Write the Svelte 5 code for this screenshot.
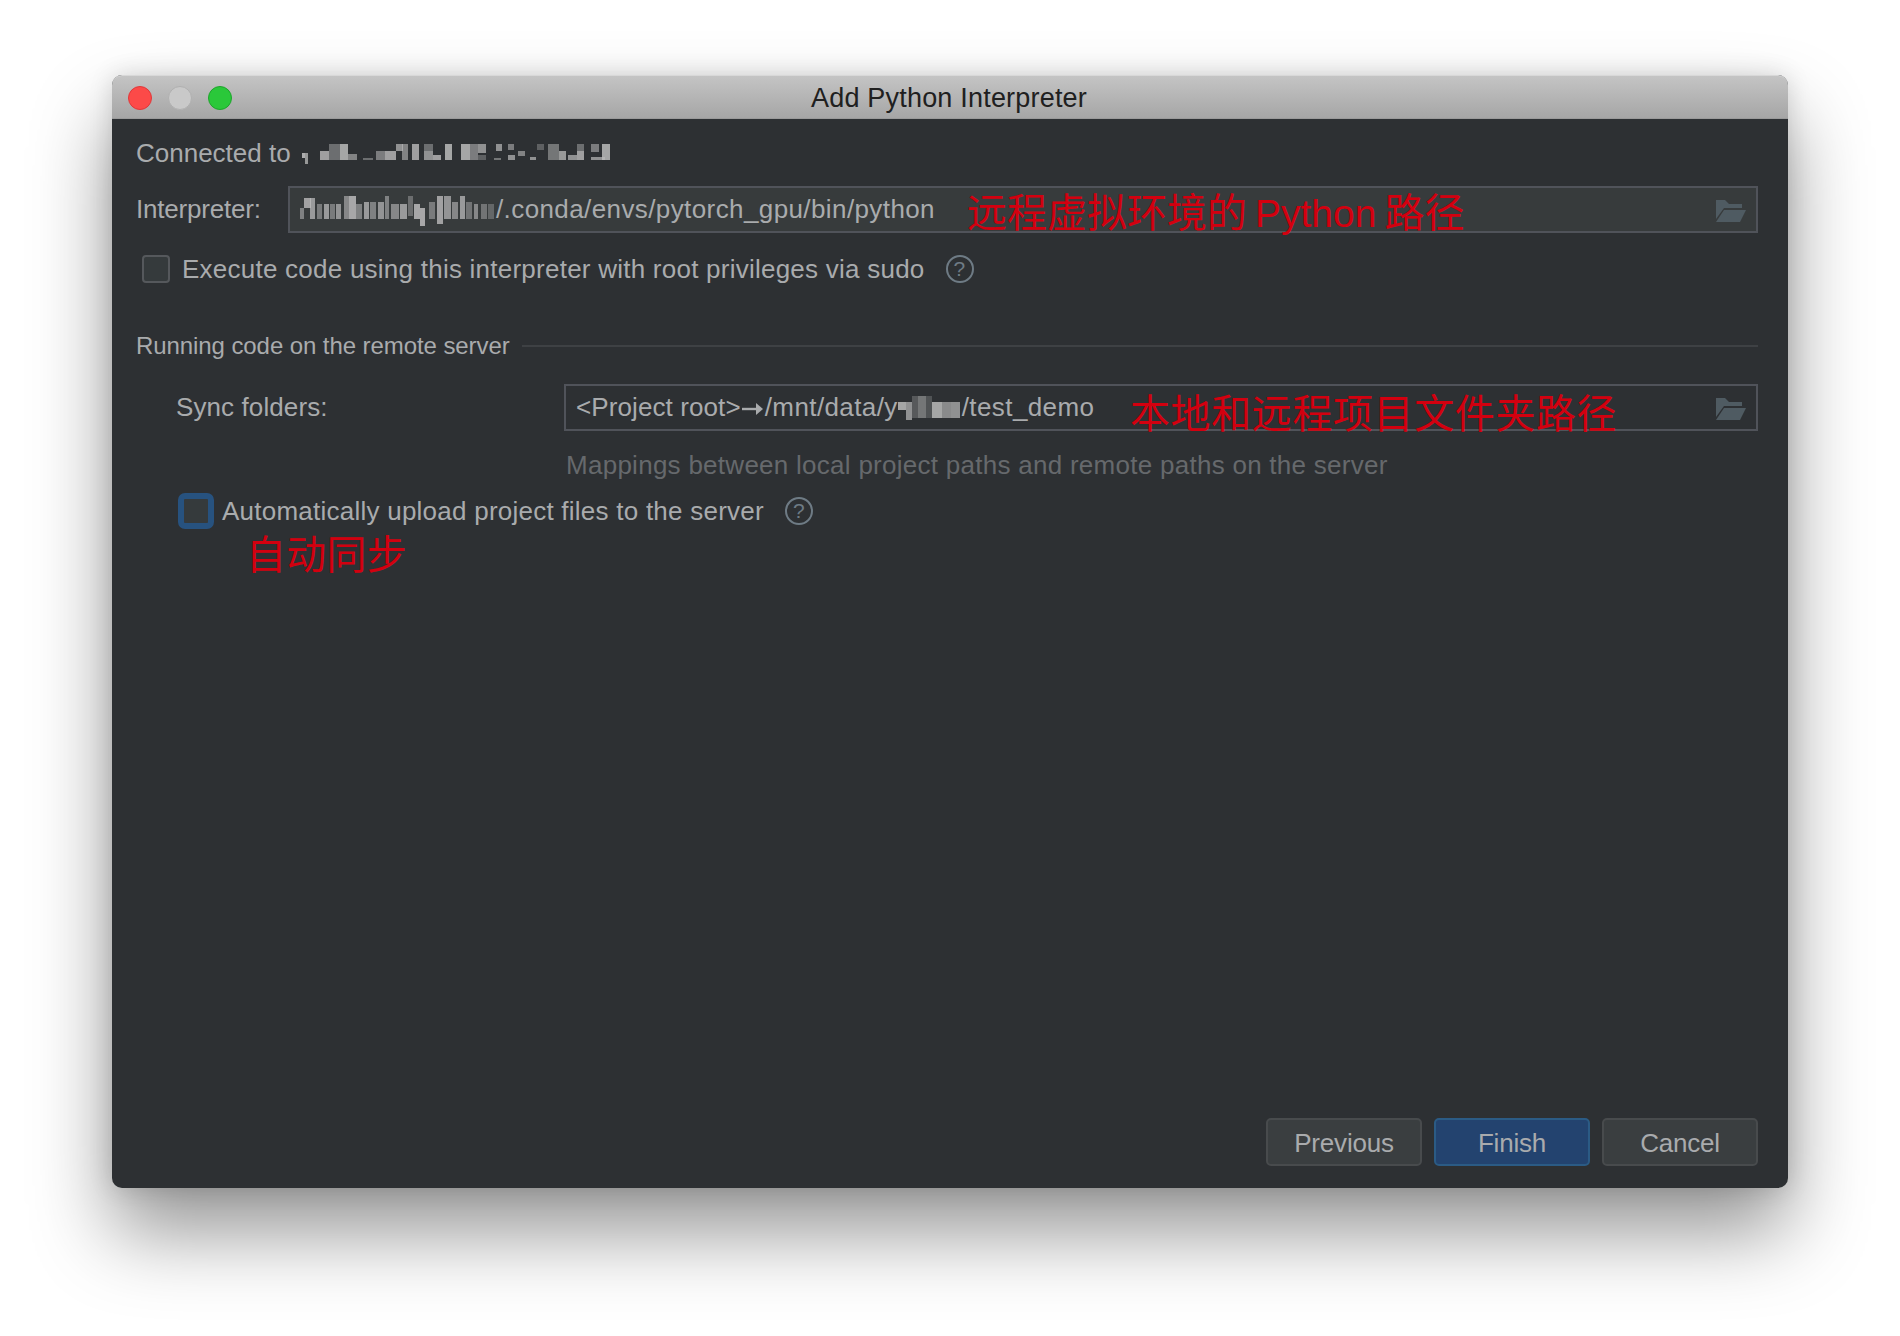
<script>
  // mosaic cells for the censored strings: [x, y, w, h, alpha]
  const hostCells = [
    [2,10,3,5,.9],[5,10,3,11,.75],[20,8,9,9,.8],[29,1,11,16,.45],[40,1,8,16,.85],[48,11,9,6,.6],[63,15,10,2,.45],
    [76,8,9,9,.55],[85,8,11,9,.8],[96,1,7,7,.7],[102,1,6,16,.6],[112,1,7,16,.8],[124,1,9,7,.45],[124,8,9,9,.7],
    [133,12,8,5,.8],[145,1,7,16,.85],[161,1,9,16,.85],[170,1,8,16,.55],[178,1,8,9,.7],[178,12,8,5,.35],[194,15,7,2,.5],
    [196,1,6,7,.7],[208,1,6,6,.55],[208,12,7,5,.7],[218,8,7,5,.6],[230,14,6,3,.7],[237,1,7,6,.35],[248,1,11,16,.5],
    [259,8,7,9,.75],[268,12,9,5,.7],[277,1,7,7,.45],[277,8,7,9,.8],[291,1,8,8,.55],[291,14,14,3,.7],[302,1,8,16,.85]
  ];
  const pathCells = [
    [0,14,4,11,.55],[4,4,7,10,.8],[10,4,5,21,.75],[17,10,5,15,.5],[24,10,5,15,.75],[30,10,5,15,.5],[36,10,5,15,.7],
    [44,2,5,23,.6],[49,2,7,23,.85],[56,10,6,15,.55],[64,8,5,17,.75],[70,8,6,17,.55],[78,8,6,17,.7],[85,2,4,23,.55],
    [91,10,8,15,.6],[100,10,7,15,.75],[108,2,5,20,.4],[114,10,6,15,.85],[120,14,5,18,.85],[129,8,6,17,.5],[137,2,6,28,.8],
    [144,2,7,23,.7],[152,8,6,17,.6],[160,2,5,23,.75],[166,8,6,17,.45],[174,10,4,15,.6],[181,10,6,15,.45],[188,10,6,15,.35]
  ];
  const syncCells = [
    [0,8,8,8,.85],[8,8,6,18,.7],[14,2,6,22,.3],[20,2,8,22,.5],[28,2,6,22,.25],[34,8,10,16,.85],[44,8,9,16,.65],[53,8,9,16,.7]
  ];
</script>

{#snippet mosaic(cells, w, h)}
  <svg class="mosaic" width={w} height={h} viewBox="0 0 {w} {h}">
    {#each cells as c}
      <rect x={c[0]} y={c[1]} width={c[2]} height={c[3]} fill="#bbbbbb" opacity={c[4]} />
    {/each}
  </svg>
{/snippet}

{#snippet folder()}
  <svg class="folder" width="30" height="22" viewBox="0 0 30 22">
    <path d="M0 0h9l4 4h13v4H8L0 19z" fill="#4f5b62" />
    <path d="M8 10h22l-6 12H0z" fill="#4f5b62" />
  </svg>
{/snippet}

{#snippet help()}
  <span class="help">?</span>
{/snippet}

<main>
  <div class="window">
    <header class="titlebar">
      <div class="lights">
        <span class="light red"></span>
        <span class="light grey"></span>
        <span class="light green"></span>
      </div>
      <div class="title">Add Python Interpreter</div>
    </header>

    <div class="content">
      <div class="connected">
        <span>Connected to</span>
        <span class="host">{@render mosaic(hostCells, 312, 26)}</span>
      </div>

      <div class="row-interpreter">
        <span class="label-interpreter">Interpreter:</span>
        <div class="field">
          {@render mosaic(pathCells, 196, 32)}<span class="value">/.conda/envs/pytorch_gpu/bin/python</span>
          <span class="note note-one">远程虚拟环境的<span class="latin">Python</span>路径</span>
          {@render folder()}
        </div>
      </div>

      <div class="check-row first">
        <span class="checkbox"></span>
        <span>Execute code using this interpreter with root privileges via sudo</span>
        {@render help()}
      </div>

      <div class="group-title">
        <span>Running code on the remote server</span>
        <span class="rule"></span>
      </div>

      <div class="sync">
        <span class="label-sync">Sync folders:</span>
        <div class="field">
          <span class="value root">&lt;Project root&gt;</span>
          <svg class="arrow" width="22" height="14" viewBox="0 0 22 14">
            <path d="M0 7h18" stroke="#a9abad" stroke-width="2.4" fill="none" />
            <path d="M14 1l7 6-7 6z" fill="#a9abad" />
          </svg>
          <span class="value">/mnt/data/y</span>{@render mosaic(syncCells, 64, 28)}<span class="value">/test_demo</span>
          <span class="note note-two">本地和远程项目文件夹路径</span>
          {@render folder()}
        </div>
      </div>

      <div class="hint">Mappings between local project paths and remote paths on the server</div>

      <div class="check-row second">
        <span class="checkbox focused"></span>
        <span>Automatically upload project files to the server</span>
        {@render help()}
        <span class="note note-three">自动同步</span>
      </div>
    </div>

    <footer class="actions">
      <button>Previous</button>
      <button class="primary">Finish</button>
      <button>Cancel</button>
    </footer>
  </div>
</main>

<style>
  :global(body) {
    margin: 0;
    background: #ffffff;
  }

  main {
    width: 1900px;
    height: 1336px;
    box-sizing: border-box;
    padding: 75px 112px 148px;
    font-family: "Liberation Sans", Arial, "Noto Sans CJK SC", sans-serif;
    font-size: 26px;
    color: #a9abad;
    overflow: hidden;
  }

  .window {
    position: relative;
    height: 100%;
    display: flex;
    flex-direction: column;
    background: #2d3033;
    border-radius: 10px;
    box-shadow: 0 44px 80px rgba(0, 0, 0, 0.42), 0 0 24px rgba(0, 0, 0, 0.14);
    overflow: visible;
  }

  .titlebar {
    position: relative;
    height: 44px;
    flex: none;
    background: linear-gradient(#c4c4c4, #a6a6a6);
    border-top: 1px solid #d8d8d8;
    border-bottom: 1px solid #9a9a9a;
    box-sizing: border-box;
    border-radius: 10px 10px 0 0;
    display: flex;
    align-items: center;
    justify-content: center;
  }

  .lights {
    position: absolute;
    left: 16px;
    top: 10px;
    display: flex;
    gap: 16px;
  }

  .light {
    width: 24px;
    height: 24px;
    box-sizing: border-box;
    border-radius: 50%;
  }

  .red { background: #fc4a48; border: 1px solid #e0383a; }
  .grey { background: #c9c9c9; border: 1px solid #b0b0b0; }
  .green { background: #2ac83a; border: 1px solid #1ea52c; }

  .title {
    color: #202020;
    font-size: 27px;
    letter-spacing: 0.2px;
    margin: 2px 0 0 -2px;
  }

  .content {
    flex: 1;
    padding: 0 30px 0 24px;
  }

  .connected {
    height: 67px;
    display: flex;
    align-items: center;
    gap: 9px;
    padding-top: 2px;
    box-sizing: border-box;
  }

  .host {
    display: flex;
    margin-top: 4px;
  }

  .mosaic {
    flex: none;
    filter: blur(0.7px);
  }

  .row-interpreter {
    display: flex;
    align-items: center;
  }

  .label-interpreter {
    width: 152px;
    flex: none;
    letter-spacing: -0.2px;
  }

  .field {
    position: relative;
    flex: 1;
    height: 47px;
    box-sizing: border-box;
    padding-left: 10px;
    display: flex;
    align-items: center;
    background: #373b3c;
    border: 2px solid #50535a;
  }

  .sync .field {
    background: #2d3033;
  }

  .arrow {
    flex: none;
    margin: 2px 1px 0 1px;
  }

  .folder {
    position: absolute;
    right: 10px;
    top: 12px;
  }

  .note {
    position: absolute;
    color: #d3000f;
    font-size: 40px;
    font-family: "Noto Sans CJK SC", "Liberation Sans", sans-serif;
    white-space: nowrap;
    line-height: 48px;
  }

  .latin {
    font-family: "Liberation Sans", sans-serif;
    font-size: 39px;
    margin: 0 8px;
  }

  .note-one { left: 677px; top: -2px; }
  .note-two { left: 564px; top: 1px; letter-spacing: 0.6px; }
  .note-three { left: 110px; top: 35px; }

  .check-row {
    position: relative;
    display: flex;
    align-items: center;
    height: 36px;
    white-space: nowrap;
    letter-spacing: 0.24px;
  }

  .check-row.first {
    margin-top: 18px;
    padding-left: 6px;
  }

  .check-row.second {
    margin-top: 10px;
    padding-left: 42px;
  }

  .checkbox {
    width: 28px;
    height: 28px;
    box-sizing: border-box;
    margin-right: 12px;
    background: #353a3c;
    border: 2px solid #55585c;
    border-radius: 4px;
  }

  .checkbox.focused {
    width: 36px;
    height: 36px;
    margin-right: 8px;
    border: 6px solid #27527f;
    border-radius: 7px;
  }

  .help {
    width: 28px;
    height: 28px;
    box-sizing: border-box;
    margin-left: 21px;
    border: 2px solid #6e7b85;
    border-radius: 50%;
    color: #6e7b85;
    font-size: 21px;
    line-height: 24px;
    text-align: center;
  }

  .group-title {
    margin-top: 41px;
    display: flex;
    align-items: center;
    gap: 12px;
    white-space: nowrap;
    font-size: 24px;
    letter-spacing: -0.08px;
    height: 36px;
  }

  .rule {
    flex: 1;
    height: 2px;
    background: #3e4144;
  }

  .sync {
    margin-top: 20px;
    display: flex;
    align-items: center;
  }

  .label-sync {
    width: 428px;
    flex: none;
    padding-left: 40px;
    box-sizing: border-box;
    letter-spacing: 0.1px;
  }

  .hint {
    margin: 16px 0 0 430px;
    color: #66696c;
    height: 36px;
    line-height: 36px;
    letter-spacing: 0.27px;
  }

  .actions {
    flex: none;
    display: flex;
    justify-content: flex-end;
    gap: 12px;
    padding: 0 30px 22px 0;
  }

  button {
    width: 156px;
    height: 48px;
    box-sizing: border-box;
    background: #3a3e40;
    border: 2px solid #484b4d;
    border-radius: 5px;
    color: #a9abad;
    font: inherit;
    letter-spacing: -0.2px;
    padding: 2px 0 0;
  }

  button.primary {
    background: #23436f;
    border-color: #2b5b85;
  }

  .value {
    white-space: nowrap;
    letter-spacing: 0.4px;
  }

  .value.root {
    letter-spacing: 0.1px;
  }
</style>
